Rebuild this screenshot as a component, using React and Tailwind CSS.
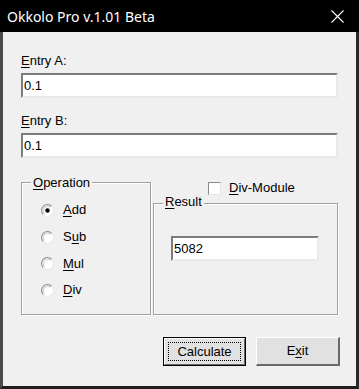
import React from 'react';

const font = { fontFamily: '"Liberation Sans", Arial, sans-serif' };

// underlined mnemonic letter
const U = ({ children }) => <span className="underline underline-offset-[2px] decoration-1">{children}</span>;

const Edit = ({ value }) => (
  <div className="h-[25px] bg-white border-2 border-t-[#7c7c7c] border-l-[#7c7c7c] border-b-[#e9e9e9] border-r-[#e9e9e9] flex items-center pl-[1px] text-[13px] text-black">
    {value}
  </div>
);

const Radio = ({ checked }) => (
  <svg width="13" height="13" viewBox="0 0 13 13" className="shrink-0">
    <circle cx="6.5" cy="6.5" r="6" fill="#fff" />
    <path d="M2.3 10.7 A5.9 5.9 0 0 1 10.7 2.3" fill="none" stroke="#8c8c8c" strokeWidth="1.1" />
    <path d="M3.2 9.8 A4.7 4.7 0 0 1 9.8 3.2" fill="none" stroke="#c4c4c4" strokeWidth="1" />
    <path d="M10.7 2.3 A5.9 5.9 0 0 1 2.3 10.7" fill="none" stroke="#e6e6e6" strokeWidth="1" />
    {checked && <circle cx="6.5" cy="6.5" r="2.2" fill="#000" />}
  </svg>
);

const RadioRow = ({ checked, children }) => (
  <div className="h-[26.7px] flex items-center gap-[9px] pl-[19px]">
    <Radio checked={checked} />
    <span className="text-[13px] text-black leading-4">{children}</span>
  </div>
);

const Group = ({ label, top, className, children }) => (
  <div className={`relative border border-[#a0a0a0] shadow-[inset_1px_1px_0_#fff,1px_1px_0_#fff] ${className}`}>
    <span className={`absolute left-[9px] ${top} bg-[#f0f0f0] px-[2px] text-[13px] leading-4 text-black`}>{label}</span>
    {children}
  </div>
);

export default function App() {
  return (
    <div className="w-[359px] h-[389px] flex flex-col bg-black" style={font}>
      {/* Title bar */}
      <div className="h-[32px] shrink-0 flex items-center justify-between pl-[7px] pr-[15px] text-white">
        <span className="text-[14px]" style={{ fontFamily: '"Noto Sans", "Open Sans", sans-serif' }}>Okkolo Pro v.1.01 Beta</span>
        <svg width="13" height="13" viewBox="0 0 13 13">
          <path d="M0.5 0.5 L12.5 12.5 M12.5 0.5 L0.5 12.5" stroke="#fff" strokeWidth="1.1" />
        </svg>
      </div>

      {/* Body */}
      <div className="flex-1 bg-[#f0f0f0] border-l-[3px] border-r-[3px] border-b-[3px] border-l-[#4a4a4a] border-r-[#2a2a2a] border-b-[#1e1e1e] pl-[18px] pr-[18px] pt-[21px] flex flex-col">
        <label className="text-[13px] leading-4 text-black"><U>E</U>ntry A:</label>
        <div className="mt-[4px]"><Edit value="0.1" /></div>
        <label className="mt-[15px] text-[13px] leading-4 text-black"><U>E</U>ntry B:</label>
        <div className="mt-[4px]"><Edit value="0.1" /></div>

        <div className="mt-[23px] flex gap-[1px]">
          <Group label={<><U>O</U>peration</>} top="-top-[8px]" className="mt-[1px] w-[130px] h-[133px] pt-[14px]">
            <RadioRow checked><U>A</U>dd</RadioRow>
            <RadioRow>S<U>u</U>b</RadioRow>
            <RadioRow><U>M</U>ul</RadioRow>
            <RadioRow><U>D</U>iv</RadioRow>
          </Group>

          <div className="flex-1 flex flex-col">
            <div className="h-[14px] flex items-center pl-[56px] gap-[8px]">
              <div className="w-[13px] h-[13px] bg-white border border-t-[#8a8a8a] border-l-[#8a8a8a] border-b-[#e6e6e6] border-r-[#e6e6e6]" />
              <span className="text-[13px] leading-4 text-black"><U>D</U>iv-Module</span>
            </div>
            <Group label={<><U>R</U>esult</>} top="-top-[10px]" className="mt-[8px] h-[112px] ml-[1px] pt-[32px] pl-[17px] pr-[18px]">
              <Edit value="5082" />
            </Group>
          </div>
        </div>

        <div className="mt-[22px] flex justify-end gap-[10px] -mr-[2px]">
          <button className="w-[83px] h-[29px] border border-black bg-[#e1e1e1] p-0">
            <div className="h-full border border-t-white border-l-white border-b-[#696969] border-r-[#696969] p-[3px]">
              <div className="h-full border border-dotted border-black flex items-center justify-center text-[13px] text-black">
                Calculate
              </div>
            </div>
          </button>
          <button className="w-[84px] h-[29px] bg-[#e1e1e1] border-t border-l border-b-2 border-r-2 border-t-white border-l-white border-b-[#696969] border-r-[#696969] flex items-center justify-center text-[13px] text-black">
            E<U>x</U>it
          </button>
        </div>
      </div>
    </div>
  );
}
